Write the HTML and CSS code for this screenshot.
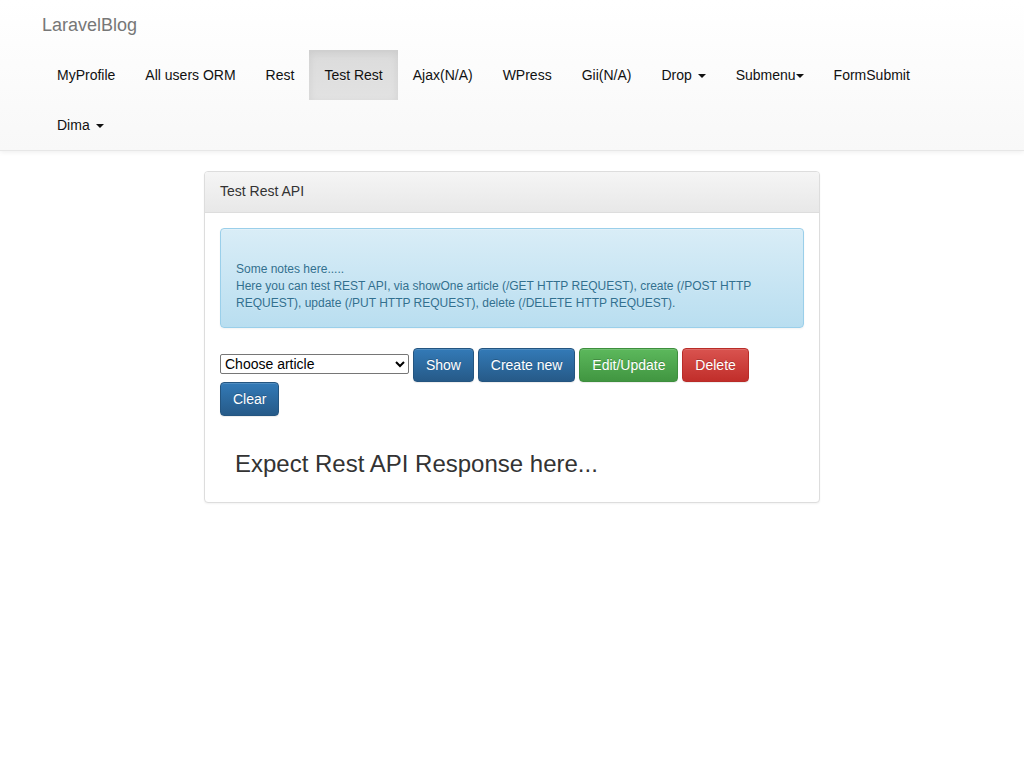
FILE: index.html
```html
<!DOCTYPE html>
<html>
<head>
<meta charset="utf-8">
<title>LaravelBlog</title>
<link rel="stylesheet" href="styles.css">
</head>
<body>
<nav class="navbar">
  <div class="navbar-inner">
    <div class="brand">LaravelBlog</div>
    <ul class="nav">
      <li><a>MyProfile</a></li>
      <li><a>All users ORM</a></li>
      <li><a>Rest</a></li>
      <li class="active"><a>Test Rest</a></li>
      <li><a>Ajax(N/A)</a></li>
      <li><a>WPress</a></li>
      <li><a>Gii(N/A)</a></li>
      <li><a>Drop <span class="caret"></span></a></li>
      <li><a>Submenu<span class="caret tight"></span></a></li>
      <li><a>FormSubmit</a></li>
      <li><a>Dima <span class="caret"></span></a></li>
    </ul>
  </div>
</nav>

<main class="panel">
  <div class="panel-heading">Test Rest API</div>
  <div class="panel-body">
    <div class="alert">
      <p class="empty"></p>
      <p>Some notes here.....<br>Here you can test REST API, via showOne article (/GET HTTP REQUEST), create (/POST HTTP REQUEST), update (/PUT HTTP REQUEST), delete (/DELETE HTTP REQUEST).</p>
    </div>
    <div class="controls">
      <select class="article-select"><option>Choose article</option></select>
      <button class="btn btn-primary">Show</button>
      <button class="btn btn-primary">Create new</button>
      <button class="btn btn-success">Edit/Update</button>
      <button class="btn btn-danger">Delete</button>
      <button class="btn btn-primary">Clear</button>
    </div>
    <div class="response">
      <h3>Expect Rest API Response here...</h3>
    </div>
  </div>
</main>
</body>
</html>
```

FILE: styles.css
```css
* { box-sizing: border-box; }
html, body { margin: 0; padding: 0; }
body {
  font-family: "Liberation Sans", Arial, sans-serif;
  font-size: 14px;
  line-height: 1.42857;
  color: #333;
  background: #fff;
}

.navbar {
  background-image: linear-gradient(to bottom, #fff 0, #f8f8f8 100%);
  border-bottom: 1px solid #e7e7e7;
  box-shadow: inset 0 1px 0 rgba(255,255,255,.15), 0 1px 5px rgba(0,0,0,.075);
  margin-bottom: 20px;
}
.navbar-inner {
  width: 940px;
  margin: 0 auto;
}
.brand {
  height: 50px;
  padding: 15px 0;
  font-size: 18px;
  line-height: 20px;
  color: #777;
}
.nav {
  list-style: none;
  margin: 0;
  padding: 0;
  display: flex;
  flex-wrap: wrap;
}
.nav li a {
  display: block;
  padding: 15px;
  line-height: 20px;
  color: #111;
  text-shadow: 0 1px 0 rgba(255,255,255,.25);
}
.nav li.active a {
  background-image: linear-gradient(to bottom, #dbdbdb 0, #e2e2e2 100%);
  box-shadow: inset 0 3px 9px rgba(0,0,0,.075);
}
.caret {
  display: inline-block;
  width: 0;
  height: 0;
  margin-left: 2px;
  vertical-align: middle;
  border-top: 4px solid #111;
  border-left: 4px solid transparent;
  border-right: 4px solid transparent;
}
.caret.tight { margin-left: 0; }

.panel {
  display: block;
  width: 616px;
  margin: 0 auto 20px;
  border: 1px solid #ddd;
  border-radius: 4px;
  background: #fff;
  box-shadow: 0 1px 2px rgba(0,0,0,.05);
}
.panel-heading {
  padding: 10px 15px;
  border-bottom: 1px solid #ddd;
  border-radius: 3px 3px 0 0;
  background-image: linear-gradient(to bottom, #f5f5f5 0, #e8e8e8 100%);
  color: #333;
}
.panel-body { padding: 15px; }

.alert {
  padding: 15px;
  margin-bottom: 20px;
  border: 1px solid #9acfea;
  border-radius: 4px;
  background-image: linear-gradient(to bottom, #d9edf7 0, #b9def0 100%);
  color: #31708f;
  font-size: 12px;
  line-height: 17px;
  text-shadow: 0 1px 0 rgba(255,255,255,.2);
  box-shadow: inset 0 1px 0 rgba(255,255,255,.25), 0 1px 2px rgba(0,0,0,.05);
}
.alert p { margin: 0; }
.alert p.empty { height: 17px; }

.article-select {
  width: 189px;
  height: 20px;
  padding: 0;
  font-family: "Liberation Sans", Arial, sans-serif;
  font-size: 14px;
  color: #000;
  background: #fff;
  border: 1px solid #767676;
  border-radius: 2px;
}
.btn {
  display: inline-block;
  padding: 6px 12px;
  font-family: "Liberation Sans", Arial, sans-serif;
  font-size: 14px;
  line-height: 20px;
  color: #fff;
  border: 1px solid transparent;
  border-radius: 4px;
  text-shadow: 0 -1px 0 rgba(0,0,0,.2);
  box-shadow: inset 0 1px 0 rgba(255,255,255,.15), 0 1px 1px rgba(0,0,0,.075);
  vertical-align: middle;
  cursor: pointer;
}
.btn-primary {
  background-image: linear-gradient(to bottom, #337ab7 0, #265a88 100%);
  border-color: #245580;
}
.btn-success {
  background-image: linear-gradient(to bottom, #5cb85c 0, #419641 100%);
  border-color: #3e8f3e;
}
.btn-danger {
  background-image: linear-gradient(to bottom, #d9534f 0, #c12e2a 100%);
  border-color: #b92c28;
}

.response {
  padding: 0 15px;
  margin-top: 35px;
}
.response h3 {
  margin: 0 0 10px;
  font-size: 24px;
  font-weight: 500;
  line-height: 1.1;
  color: #333;
}
```
